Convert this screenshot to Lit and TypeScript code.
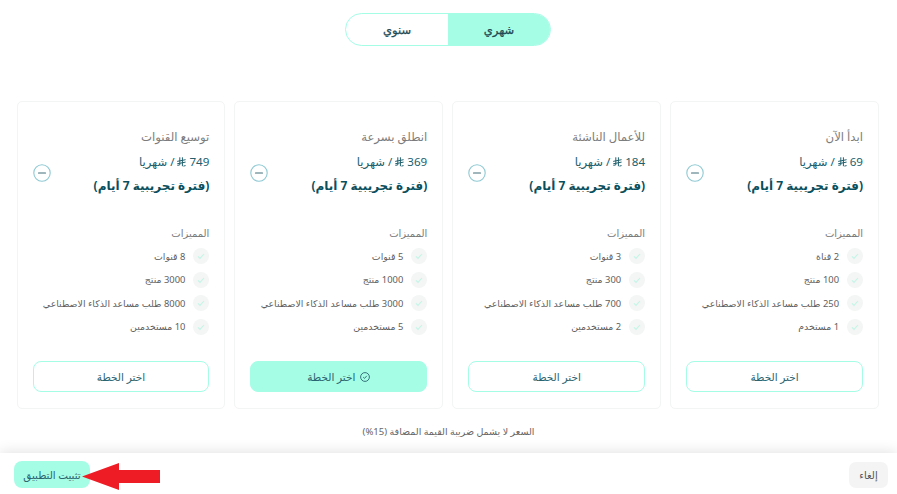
import { LitElement, html, css } from 'lit';
import { customElement } from 'lit/decorators.js';

interface Plan {
  name: string;
  price: number;
  features: string[];
  selected?: boolean;
}

const plans: Plan[] = [
  { name: 'ابدأ الآن', price: 69, features: ['2 قناة', '100 منتج', '250 طلب مساعد الذكاء الاصطناعي', '1 مستخدم'] },
  { name: 'للأعمال الناشئة', price: 184, features: ['3 قنوات', '300 منتج', '700 طلب مساعد الذكاء الاصطناعي', '2 مستخدمين'] },
  { name: 'انطلق بسرعة', price: 369, features: ['5 قنوات', '1000 منتج', '3000 طلب مساعد الذكاء الاصطناعي', '5 مستخدمين'], selected: true },
  { name: 'توسيع القنوات', price: 749, features: ['8 قنوات', '3000 منتج', '8000 طلب مساعد الذكاء الاصطناعي', '10 مستخدمين'] },
];

@customElement('app-root')
export class AppRoot extends LitElement {
  static styles = css`
    :host {
      display: block;
      height: 494px;
      overflow: hidden;
      background: #fff;
      color: #0b4f5c;
      font-family: 'Noto Sans', 'DejaVu Sans', sans-serif;
      position: relative;
    }

    .page {
      direction: rtl;
      display: flex;
      flex-direction: column;
      height: 100%;
    }

    .toggle {
      display: flex;
      align-self: center;
      width: 206px;
      height: 33px;
      margin-top: 13px;
      margin-right: 1px;
      box-sizing: border-box;
      border: 1.5px solid #a5fde6;
      border-radius: 17px;
      overflow: hidden;
      font-size: 11.5px;
      -webkit-text-stroke: 0.25px #1f4a54;
      color: #1f4a54;
    }

    .toggle span {
      flex: 1;
      display: flex;
      align-items: center;
      justify-content: center;
    }

    .toggle .on {
      background: #a5fde6;
    }

    .plans {
      display: grid;
      grid-template-columns: repeat(4, 1fr);
      gap: 9px;
      padding: 0 18px 0 16.5px;
      margin-top: 55px;
    }

    .card {
      height: 308px;
      box-sizing: border-box;
      border: 1px solid #f3f4f4;
      border-radius: 5px;
      padding: 26px 15px 16px;
      display: flex;
      flex-direction: column;
    }

    .head {
      display: flex;
      justify-content: space-between;
      align-items: center;
    }

    .name {
      font-size: 11.7px;
      line-height: 16px;
      color: #7c7c7c;
    }

    .price {
      display: flex;
      align-items: center;
      gap: 3px;
      margin-top: 9px;
      font-size: 11.6px;
      line-height: 18px;
      color: #20606e;
    }

    .price svg {
      width: 9px;
      height: 10px;
    }

    .trial {
      margin-top: 6px;
      font-size: 12px;
      line-height: 18px;
      font-weight: 700;
      color: #0b4f5c;
    }

    .collapse {
      width: 18px;
      height: 18px;
      flex: none;
      margin-top: 22px;
    }

    .label {
      margin-top: 30px;
      font-size: 10px;
      line-height: 16px;
      color: #7c7c7c;
    }

    ul {
      list-style: none;
      margin: 7px 0 0;
      padding: 0;
      display: flex;
      flex-direction: column;
      gap: 7.67px;
    }

    li {
      display: flex;
      align-items: center;
      gap: 8px;
      height: 16px;
      font-size: 9.4px;
      white-space: nowrap;
      color: #5f5f5f;
    }

    li svg {
      width: 16px;
      height: 16px;
      flex: none;
    }

    .choose {
      margin-top: auto;
      height: 31px;
      box-sizing: border-box;
      border: 1px solid #a5fde6;
      border-radius: 8px;
      background: #fff;
      display: flex;
      align-items: center;
      justify-content: center;
      gap: 5px;
      font: inherit;
      font-size: 10.5px;
      font-weight: 500;
      color: #2c6470;
    }

    .choose.active {
      background: #a5fde6;
    }

    .choose svg {
      width: 10px;
      height: 10px;
    }

    .note {
      margin-top: 15px;
      text-align: center;
      font-size: 9.5px;
      line-height: 16px;
      color: #666;
    }

    .bar {
      margin-top: auto;
      height: 41px;
      box-sizing: border-box;
      background: #fff;
      box-shadow: 0 -1px 14px rgba(0, 0, 0, 0.12);
      display: flex;
      align-items: flex-start;
      justify-content: space-between;
      padding: 8px 9px 0 14px;
    }

    .bar button {
      font: inherit;
      font-size: 10px;
      border: 0;
      padding: 0;
      display: flex;
      align-items: center;
      justify-content: center;
    }

    .bar .cancel {
      width: 39px;
      height: 26px;
      margin-top: 1px;
      border-radius: 7px;
      background: #f4f4f4;
      color: #555;
    }

    .bar .install {
      width: 76px;
      height: 27px;
      border-radius: 8px;
      background: #a5fde6;
      color: #2c6470;
      font-size: 10.3px;
    }

    .arrow {
      position: absolute;
      left: 82px;
      top: 463px;
      width: 78px;
      height: 27px;
    }
  `;

  private riyal() {
    return html`<svg viewBox="0 0 9 10" fill="none" stroke="currentColor" stroke-width="1">
      <path d="M2.8 .3v7.6L.4 8.4M5.4 .3v8.9M.2 4.4l8.4-1.7M.2 6.8l8.4-1.7M6.4 9.1l2.2-.5" />
    </svg>`;
  }

  private renderCard(p: Plan) {
    return html`
      <article class="card">
        <div class="head">
          <div>
            <div class="name">${p.name}</div>
            <div class="price">
              <span>${p.price}</span>${this.riyal()}<span>/ شهريا</span>
            </div>
            <div class="trial">(فترة تجريبية 7 أيام)</div>
          </div>
          <svg class="collapse" viewBox="0 0 18 18" fill="none">
            <circle cx="9" cy="9" r="8.2" stroke="#8fc9d3" stroke-width="1.1" />
            <path d="M5.5 9h7" stroke="#3f6f7a" stroke-width="1.1" stroke-linecap="round" />
          </svg>
        </div>
        <div class="label">المميزات</div>
        <ul>
          ${p.features.map(
            (f) => html`<li>
              <svg viewBox="0 0 16 16" fill="none">
                <circle cx="8" cy="8" r="8" fill="#f4f5f5" />
                <path d="M5 8.4l2 2 4-4.4" stroke="#c3f5e6" stroke-width="1.1" />
              </svg>
              <span>${f}</span>
            </li>`,
          )}
        </ul>
        <button class="choose ${p.selected ? 'active' : ''}">
          ${p.selected
            ? html`<svg viewBox="0 0 10 10" fill="none" stroke="#2c6470" stroke-width=".9">
                <circle cx="5" cy="5" r="4.4" />
                <path d="M3.2 5.1l1.3 1.3 2.3-2.6" />
              </svg>`
            : ''}
          اختر الخطة
        </button>
      </article>
    `;
  }

  render() {
    return html`
      <div class="page">
        <div class="toggle">
          <span class="on">شهري</span>
          <span>سنوي</span>
        </div>
        <section class="plans">${plans.map((p) => this.renderCard(p))}</section>
        <div class="note">السعر لا يشمل ضريبة القيمة المضافة (15%)</div>
        <footer class="bar">
          <button class="cancel">إلغاء</button>
          <button class="install">تثبيت التطبيق</button>
        </footer>
      </div>
      <svg class="arrow" viewBox="0 0 78 27">
        <path d="M0 13.5L37 0v7h41v13H37v7z" fill="#ee1c25" />
      </svg>
    `;
  }
}
